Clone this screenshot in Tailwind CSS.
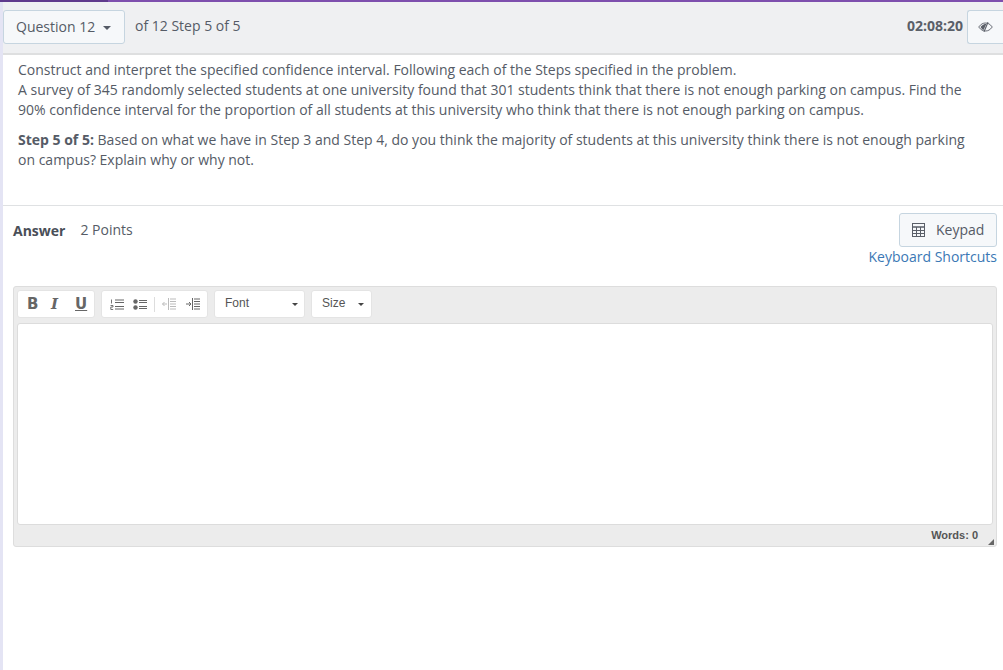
<!DOCTYPE html>
<html><head><meta charset="utf-8"><script src="https://cdn.jsdelivr.net/npm/@tailwindcss/browser@4"></script></head>
<body class="m-0 bg-white">
<div class="w-[1003px] h-[670px] overflow-hidden flex flex-col font-['Open_Sans',sans-serif] text-[14px] leading-[20px] text-[#555b66]">
  <div class="h-[2px] shrink-0 flex"><div class="w-[108px] bg-[#5f3a8c]"></div><div class="flex-1 bg-[#7e4fae]"></div></div>
  <div class="flex-1 flex min-h-0">
    <div class="w-[3px] shrink-0 bg-[#e4e4f4]"></div>
    <div class="flex-1 min-w-0 flex flex-col">
      <div class="h-[53px] shrink-0 bg-[#eff0f2] border-b-2 border-[#dedfe0] flex items-start pt-[8px]">
        <div class="w-[122px] h-[34px] border border-[#c6d5e0] rounded-[3px] bg-[#f6f8fa] flex items-center pl-[12px] gap-[8px]">
          <span>Question 12</span><span class="w-0 h-0 border-x-[4px] border-x-transparent border-t-[4px] border-t-[#555b66] mt-[1px]"></span>
        </div>
        <span class="ml-[10px] mt-[6px]">of 12 Step 5 of 5</span>
        <span class="ml-auto mt-[6px] font-bold text-[#5a5f68]">02:08:20</span>
        <div class="ml-[4px] w-[36px] h-[34px] border border-[#c6d5e0] border-r-0 rounded-l-[3px] bg-[#f6f8fa] flex items-center justify-center">
          <svg width="15" height="10" viewBox="0 0 15 10" fill="none" stroke="#5a5f68"><path d="M.7 5C3 2 5 1 7.500 1S12 2 14.300 5C12 8 10 9 7.500 9S3 8 .7 5Z" stroke-width=".9"/><path d="M2.500 5C4 3 6 2 8.500 1.800L5.500 8C4 7.500 3.300 6 2.500 5Z" fill="#5a5f68" stroke="none"/><path d="M10 .2L6 9.800" stroke-width="1.100"/></svg>
        </div>
      </div>
      <div class="h-[151px] shrink-0 border-b border-[#dfe1e3] pl-[15px] pr-[30px] pt-[5px]">
        <p>Construct and interpret the specified confidence interval. Following each of the Steps specified in the problem.</p>
        <p>A survey of 345 randomly selected students at one university found that 301 students think that there is not enough parking on campus. Find the 90% confidence interval for the proportion of all students at this university who think that there is not enough parking on campus.</p>
        <p class="mt-[10px]"><b>Step 5 of 5:</b> Based on what we have in Step 3 and Step 4, do you think the majority of students at this university think there is not enough parking on campus? Explain why or why not.</p>
      </div>
      <div class="flex justify-between items-start pl-[10px] pr-[6px] pt-[7px] h-[80px] shrink-0">
        <div class="flex items-center mt-[8px]"><b class="text-[#4a4f58]">Answer</b><span class="ml-[15px] relative -top-[1px]">2 Points</span></div>
        <div class="flex flex-col items-end">
          <div class="w-[98px] h-[34px] border border-[#c6d5e0] rounded-[3px] bg-[#f6f8fa] flex items-center pl-[12px] gap-[11px]">
            <svg width="13" height="14" viewBox="0 0 13 14" fill="none" stroke="#5a5f68"><rect x=".5" y=".5" width="12" height="13"/><path d="M.5 4H12.500" stroke-width="1.500"/><path d="M.5 7.500H12.500M.5 10.500H12.500M4.500 4V14M8.500 4V14"/></svg>
            <span>Keypad</span>
          </div>
          <a class="text-[#3b78b5]">Keyboard Shortcuts</a>
        </div>
      </div>
      <div class="ml-[10px] mr-[6px] h-[261px] shrink-0 bg-[#ececec] border border-[#dddddd] rounded-[3px] flex flex-col font-['Liberation_Sans',sans-serif] text-[12px] px-[3px]">
        <div class="h-[36px] shrink-0 flex items-start gap-[6px] pt-[3px]">
          <div class="h-[28px] w-[78px] bg-white rounded-[3px] border border-[#e4e4e4] flex items-center pl-[9px] text-[#666] font-['DejaVu_Sans',sans-serif] text-[15px]">
            <b class="w-[24px]">B</b><b class="w-[24px] italic font-['DejaVu_Serif',serif]">I</b><b class="underline">U</b>
          </div>
          <div class="h-[28px] w-[107px] bg-white rounded-[3px] border border-[#e4e4e4] flex items-center pl-[8px]">
            <svg width="14" height="11" viewBox="0 0 14 11" fill="none" stroke="#666"><path d="M1.500 .5V4.500M.5 6.500H3V8H.8V10.500H3.200" stroke-width=".9"/><path d="M5 1H14M5 3.500H14M5 7.500H14M5 10H14" /></svg>
            <svg class="ml-[9px]" width="14" height="11" viewBox="0 0 14 11" fill="none" stroke="#666"><circle cx="2.500" cy="2.500" r="2.200" fill="#666" stroke="none"/><circle cx="2.500" cy="8.500" r="2.200" fill="#666" stroke="none"/><path d="M6 1.500H14M6 3.500H14M6 7.500H14M6 9.500H14" stroke-width="1.100"/></svg>
            <span class="w-px h-[15px] bg-[#ddd] ml-[7px]"></span>
            <svg class="ml-[7px]" width="14" height="12" viewBox="0 0 14 12" fill="none" stroke="#bbb"><path d="M6.500 0V12M8 1H14M8 3.500H14M8 6H14M8 8.500H14M8 11H14M.5 6H5M2.500 4L.5 6L2.500 8"/></svg>
            <svg class="ml-[10px]" width="14" height="12" viewBox="0 0 14 12" fill="none" stroke="#666"><path d="M6.500 0V12M8 1H14M8 3.500H14M8 6H14M8 8.500H14M8 11H14M0 6H5M3 4L5 6L3 8"/></svg>
          </div>
          <div class="h-[28px] w-[91px] bg-white rounded-[3px] border border-[#e4e4e4] flex items-center justify-between pl-[10px] pr-[6px] text-[#555]">
            <span class="relative -top-[1px]">Font</span><span class="w-0 h-0 border-x-[3px] border-x-transparent border-t-[3px] border-t-[#444]"></span>
          </div>
          <div class="h-[28px] w-[61px] bg-white rounded-[3px] border border-[#e4e4e4] flex items-center justify-between pl-[10px] pr-[7px] text-[#555]">
            <span class="relative -top-[1px]">Size</span><span class="w-0 h-0 border-x-[3px] border-x-transparent border-t-[3px] border-t-[#444]"></span>
          </div>
        </div>
        <div class="h-[202px] shrink-0 bg-white border border-[#dcdcdc] rounded-[3px]"></div>
        <div class="relative flex-1 flex items-center justify-end pr-[15px] pb-[2px] text-[11px] font-bold text-[#555]">
          <span>Words: 0</span>
          <span class="absolute right-[-1px] bottom-[2px] w-0 h-0 border-l-[6px] border-l-transparent border-b-[6px] border-b-[#666]"></span>
        </div>
      </div>
    </div>
  </div>
</div>
</body></html>
